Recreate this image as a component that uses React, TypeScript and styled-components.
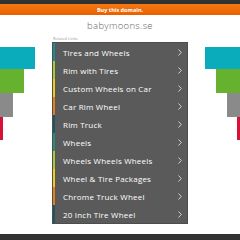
import React from "react";
import styled, { createGlobalStyle } from "styled-components";

const Global = createGlobalStyle`
  html, body { margin: 0; padding: 0; background: #fff; }
  body { font-family: "Open Sans", "Noto Sans", sans-serif; width: 240px; height: 240px; overflow: hidden; }
`;

const Page = styled.div`
  width: 240px;
  height: 240px;
  display: flex;
  flex-direction: column;
`;

const TopBar = styled.div`
  height: 4px;
  background: #333;
`;

const BuyBar = styled.div`
  height: 11px;
  background: linear-gradient(#f47a12, #e85f00);
  display: flex;
  align-items: center;
  justify-content: center;
  color: #fff;
  font-size: 5.5px;
  font-weight: 700;
  font-family: "Open Sans", sans-serif;
`;

const Domain = styled.div`
  height: 19px;
  display: flex;
  align-items: center;
  justify-content: center;
  color: #666;
  font-size: 9.5px;
  font-weight: 300;
  letter-spacing: 0.3px;
  padding-top: 1px;
`;

const Main = styled.div`
  display: grid;
  grid-template-columns: 52px 136px 52px;
`;

const Side = styled.div<{ $right?: boolean }>`
  padding-top: 12px;
  display: flex;
  flex-direction: column;
  align-items: ${(p) => (p.$right ? "flex-end" : "flex-start")};
`;

const Bar = styled.div<{ $w: number; $h: number; $c: string }>`
  width: ${(p) => p.$w}px;
  height: ${(p) => p.$h}px;
  background: ${(p) => p.$c};
`;

const Center = styled.div`
  display: flex;
  flex-direction: column;
`;

const Label = styled.div`
  height: 7px;
  font-size: 4px;
  color: #999;
  line-height: 7px;
  padding-left: 1px;
`;

const Panel = styled.div`
  background: #5a5a5a;
  display: flex;
  flex-direction: column;
  border: 0.5px solid #4d4d4d;
`;

const Row = styled.div<{ $c: string }>`
  height: 18px;
  display: flex;
  align-items: center;
  border-left: 2px solid ${(p) => p.$c};
  padding-left: 8px;
  padding-right: 5px;
  color: #fff;
  font-size: 8px;
  letter-spacing: 0.2px;
`;

const RowText = styled.span`
  flex: 1;
`;

const Chevron = () => (
  <svg width="4" height="7" viewBox="0 0 4 7">
    <polyline points="0.5,0.5 3.3,3.5 0.5,6.5" fill="none" stroke="#eee" strokeWidth="0.8" />
  </svg>
);

const Spacer = styled.div`
  flex: 1;
`;

const BottomBar = styled.div`
  height: 6px;
  background: #333;
`;

const links: [string, string][] = [
  ["Tires and Wheels", "#1b8a96"],
  ["Rim with Tires", "#a9c832"],
  ["Custom Wheels on Car", "#f2cc1a"],
  ["Car Rim Wheel", "#e67e16"],
  ["Rim Truck", "#1f5566"],
  ["Wheels", "#2a8c7c"],
  ["Wheels Wheels Wheels", "#a9c832"],
  ["Wheel & Tire Packages", "#f2cc1a"],
  ["Chrome Truck Wheel", "#e67e16"],
  ["20 Inch Tire Wheel", "#1f5566"],
];

const bars = [
  { w: 35, h: 22, c: "#0aabbb" },
  { w: 24, h: 24, c: "#66b22e" },
  { w: 13, h: 24, c: "#8a8a8a" },
  { w: 3, h: 23, c: "#d8113a" },
];

export default function App() {
  return (
    <Page>
      <Global />
      <TopBar />
      <BuyBar>Buy this domain.</BuyBar>
      <Domain>babymoons.se</Domain>
      <Main>
        <Side>
          {bars.map((b, i) => (
            <Bar key={i} $w={b.w} $h={b.h} $c={b.c} />
          ))}
        </Side>
        <Center>
          <Label>Related Links</Label>
          <Panel>
            {links.map(([t, c]) => (
              <Row key={t} $c={c}>
                <RowText>{t}</RowText>
                <Chevron />
              </Row>
            ))}
          </Panel>
        </Center>
        <Side $right>
          {bars.map((b, i) => (
            <Bar key={i} $w={b.w} $h={b.h} $c={b.c} />
          ))}
        </Side>
      </Main>
      <Spacer />
      <BottomBar />
    </Page>
  );
}
